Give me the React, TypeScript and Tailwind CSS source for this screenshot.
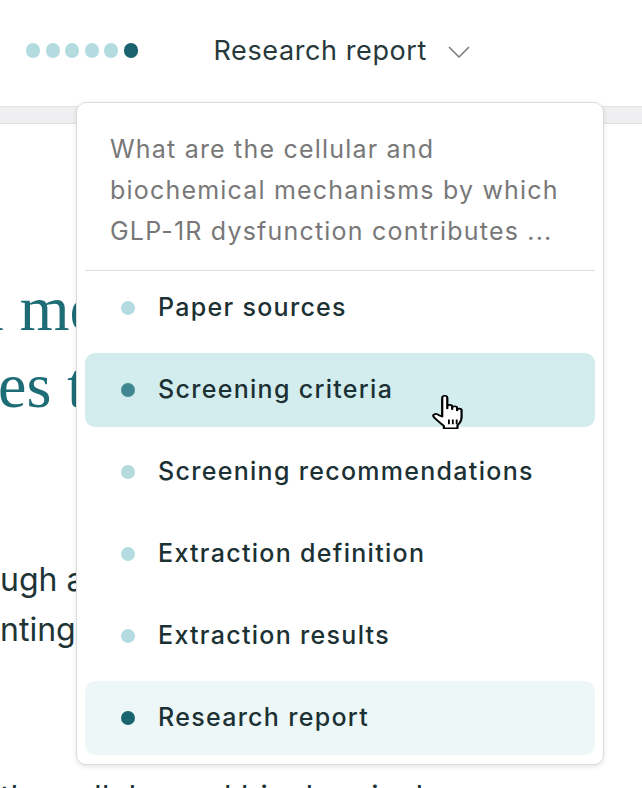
import React from 'react';

const steps = [
  { label: 'Paper sources', state: 'idle' },
  { label: 'Screening criteria', state: 'hover' },
  { label: 'Screening recommendations', state: 'idle' },
  { label: 'Extraction definition', state: 'idle' },
  { label: 'Extraction results', state: 'idle' },
  { label: 'Research report', state: 'active' },
];

const HandCursor = () => (
  <svg
    width="31"
    height="34"
    viewBox="2 0.3 15.2 23.2"
    preserveAspectRatio="none"
    className="absolute left-[432px] top-[395px]"
  >
    <path
      d="M7 15 L7 2.2 C7 1.4 7.6 0.8 8.25 0.8 C8.9 0.8 9.5 1.4 9.5 2.2 L9.5 9.5 L9.5 8.2 C9.5 7.5 10 7 10.7 7 C11.4 7 11.9 7.5 11.9 8.2 L11.9 10 L11.9 9.2 C11.9 8.5 12.4 8 13.1 8 C13.8 8 14.3 8.5 14.3 9.2 L14.3 10.8 C14.3 10.1 14.8 9.6 15.4 9.6 C16 9.6 16.5 10.1 16.5 10.8 L16.5 15.5 C16.5 18 15.4 19.8 14.5 21 L14.5 23 L7.8 23 L7.8 21.3 C6.8 20.3 4.5 17.5 3.2 15.8 C2.5 14.9 2.4 14 3.1 13.5 C3.8 13 4.7 13.3 5.4 14.1 Z"
      fill="#fff"
      stroke="#000"
      strokeWidth="1.1"
      strokeLinejoin="round"
    />
    <path d="M10.3 17 V20.3 M12.2 17 V20.3 M14.1 17 V20.3" stroke="#000" strokeWidth="0.9" />
  </svg>
);

export default function App() {
  return (
    <div className="relative w-[642px] h-[788px] overflow-hidden bg-white font-['Inter','Noto_Sans',sans-serif]">
      {/* top bar */}
      <div className="h-[106px] flex items-center pl-[26px] pb-[6px]">
        <div className="flex items-center gap-[5.5px]">
          {[0, 1, 2, 3, 4].map((i) => (
            <div key={i} className="w-[14px] h-[15px] shrink-0 rounded-full bg-[#b4dce0]" />
          ))}
          <div className="w-[14px] h-[15px] shrink-0 rounded-full bg-[#19636f]" />
        </div>
        <span className="ml-[76px] mt-[2px] text-[27px] tracking-[0.6px] text-[#27393b]">Research report</span>
        <svg width="22" height="12" viewBox="0 0 22 12" className="ml-[21px] mt-[3px]">
          <path d="M1 1 L11 11 L21 1" fill="none" stroke="#7a7a7a" strokeWidth="1.5" />
        </svg>
      </div>
      <div className="h-[18px] bg-[#efeef0] border-y border-[#e2e2e4]" />

      {/* page content behind the menu */}
      <div className="w-[600px] overflow-hidden">
        <h1 className="mt-[146px] font-['Liberation_Serif',serif] text-[64px] leading-[77px] text-[#1d6c76] whitespace-nowrap">
          <div className="ml-[-46px]">in mechanisms by which</div>
          <div className="ml-[-2px]">es to metabolic disease</div>
        </h1>
        <div className="mt-[131px] font-['Inter',sans-serif] text-[32px] leading-[50px] text-[#1e3436] whitespace-nowrap">
          <div>ugh a systematic review of</div>
          <div>nting evidence on receptor</div>
          <div className="mt-[118px]">the cellular and biochemical</div>
        </div>
      </div>

      {/* dropdown */}
      <div className="absolute left-[76px] top-[102px] w-[528px] bg-white border border-[#dcdcde] rounded-[10px] shadow-[0_2px_5px_rgba(0,0,0,0.1)]">
        <p className="pl-[33px] pr-[10px] pt-[26px] pb-[18px] text-[25px] tracking-[1.2px] leading-[41px] text-[#787878] whitespace-nowrap">
          What are the cellular and
          <br />
          biochemical mechanisms by which
          <br />
          GLP-1R dysfunction contributes ...
        </p>
        <div className="mx-[8px] h-[1px] bg-[#dedede]" />
        <div className="flex flex-col gap-[8px] px-[8px] pb-[9px]">
          {steps.map((s) => (
            <div
              key={s.label}
              className={
                'h-[74px] flex items-center pl-[36px] rounded-[10px] ' +
                (s.state === 'hover' ? 'bg-[#d3edef]' : s.state === 'active' ? 'bg-[#edf7f8]' : '')
              }
            >
              <div
                className={
                  'w-[14px] h-[14px] rounded-full shrink-0 ' +
                  (s.state === 'hover' ? 'bg-[#3f8690]' : s.state === 'active' ? 'bg-[#19656f]' : 'bg-[#b4dce0]')
                }
              />
              <span className="ml-[23px] text-[25px] tracking-[1.3px] font-medium text-[#1c3134] whitespace-nowrap">
                {s.label}
              </span>
            </div>
          ))}
        </div>
      </div>

      <HandCursor />
    </div>
  );
}
